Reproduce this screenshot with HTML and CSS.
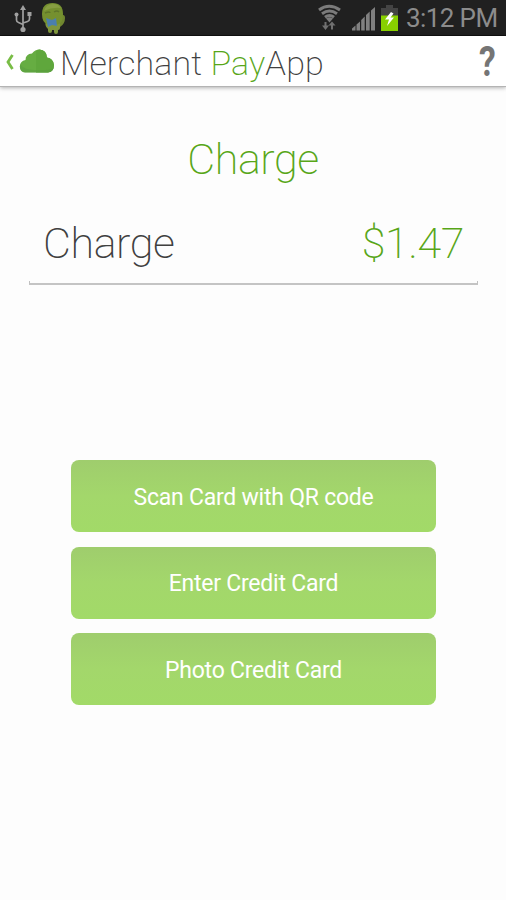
FILE: index.html
```html
<!DOCTYPE html>
<html lang="en">
<head>
<meta charset="utf-8">
<title>Merchant PayApp</title>
<link rel="stylesheet" href="styles.css">
</head>
<body>
<div class="status">
  <svg class="usb" width="18" height="28" viewBox="0 0 18 28" fill="none" stroke="#a0a0a0" stroke-width="1.700">
    <path d="M9 4v19M2.500 11v4q0 2 2 2.500l4.500 2M15.500 10v4q0 2-2 2.500L9 18"/>
    <path d="M9 0l3 5H6z" fill="#a0a0a0" stroke="none"/>
    <circle cx="9" cy="24.500" r="2.600" fill="#a0a0a0" stroke="none"/>
    <circle cx="2.500" cy="9.500" r="2" fill="#a0a0a0" stroke="none"/>
    <path d="M13.500 7h4v4h-4z" fill="#a0a0a0" stroke="none"/>
  </svg>
  <svg class="droid" width="24" height="31" viewBox="0 0 24 31">
    <path d="M18 13q5-3 5 2 0 6-5 9z" fill="#70862f"/>
    <path d="M4 16h14v9q0 2-2 2v2q0 2-2 2t-2-2v-2h-2v1q0 2-2 2t-2-2v-2q-4-3-2-10z" fill="#7f963c"/>
    <path d="M0 11Q0 0 10.500 0T21 11q0 8-4 10-6 2-12 0-5-2-5-10z" fill="#75902f"/>
    <path d="M2 8Q4 1 11 1q5 0 8 4-9-1-17 3z" fill="#879d42"/>
    <path d="M3 10q5-2 5 0M12 9q3-2 5 0" fill="none" stroke="#5f7629" stroke-width="1.500"/>
    <path d="M4 15l6 2 4-2 1 8-5-1-4 2z" fill="#4b7fae"/>
  </svg>
  <svg class="wifi" width="26" height="27" viewBox="0 0 26 27" fill="none" stroke="#7b7b7b" stroke-width="3">
    <path d="M2 6q10-7.500 21 0M5 9.700q7.500-5.500 15 0M8 13.200q4.500-3.500 9 0"/>
    <path d="M12.500 18.500L9 14.500q3.500-2.500 7 0z" fill="#7b7b7b" stroke="none"/>
    <path d="M8.500 18v5M15 25.500V21" stroke="#707070" stroke-width="2"/>
    <path d="M5 21.500h7L8.500 26zM11.500 21.500l3.500-4 3.500 4z" fill="#707070" stroke="none"/>
  </svg>
  <svg class="signal" width="24" height="24" viewBox="0 0 24 24" fill="#808080">
    <path d="M0 23.500v-2l3.500-3v5zM4.500 23.500v-6L8 14.500v9zM9.200 23.500V13l3.500-3.500v14zM14 23.500V8l3.700-3.500v19zM19 23.500V3.500l4-3.500v23.500z"/>
  </svg>
  <svg class="battery" width="17" height="26" viewBox="0 0 17 26">
    <path d="M5 0h7v3h5v8H0V3h5z" fill="#444"/>
    <path d="M0 10.500h17V26H0z" fill="#88d000"/>
    <path d="M10 7l-6 7.500h4L6 21l7-8.500H9.500l3-4z" fill="#fff"/>
  </svg>
  <span class="clock">3:12 PM</span>
</div>
<header class="bar">
  <svg class="back" width="8" height="16" viewBox="0 0 8 16" fill="none" stroke="#79bd46" stroke-width="2.800"><path d="M6.500 1Q4.500 4 2 8q2.500 4 4.500 7"/></svg>
  <svg class="cloud" width="36" height="24" viewBox="0 0 36 24">
    <path d="M6 23.500Q1 23 .8 17.500 1 12 6.500 11q0-6 6.500-6.500Q16 .500 20.500.500q7 .500 7.500 8 6 .500 7 7.500 0 7-6 7.500z" fill="#66ad42"/>
    <path d="M17 2.500Q18.500.500 20.500.500q7 .500 7.500 8 6 .500 7 7.500 0 7-6 7.500H17z" fill="#5fa73c"/>
    <path d="M6 23.500Q1 23 .8 17.500l.7-2q3 5 14 5.500 14 1 19-2-.5 4-5.500 4.500z" fill="#569840" opacity=".4"/>
  </svg>
  <h1 class="brand"><span>Merchant</span> <span class="green">Pay</span><span>App</span></h1>
  <span class="help">?</span>
</header>
<main>
  <h2 class="title">Charge</h2>
  <div class="row"><span class="label">Charge</span><span class="amount">$1.47</span></div>
  <div class="rule"></div>
  <div class="actions">
    <button>Scan Card with QR code</button>
    <button>Enter Credit Card</button>
    <button>Photo Credit Card</button>
  </div>
</main>
</body>
</html>
```
FILE: styles.css
```css
* { box-sizing: border-box; }
body { margin: 0; height: 900px; overflow: hidden; background: #fdfdfd; font-family: Roboto, "Liberation Sans", sans-serif; }
svg { display: block; flex: none; }
.status { height: 36px; background: #202020; border-bottom: 1px solid #111; display: flex; align-items: flex-start; }
.usb { margin: 5px 0 0 14px; }
.droid { margin: 3px 0 0 10px; }
.wifi { margin: 4px 0 0 251px; }
.signal { margin: 7px 0 0 9px; }
.battery { margin: 5px 0 0 5px; }
.clock { margin-left: 8px; line-height: 36px; font-size: 26px; color: #8c8c8c; white-space: nowrap; letter-spacing: -.6px; }
.bar { height: 51px; background: #fff; border-bottom: 1px solid #b4b4b4; box-shadow: 0 1px 4px rgba(0,0,0,.3); display: flex; align-items: flex-start; }
.back { margin: 18px 0 0 6px; }
.cloud { margin: 13px 0 0 5px; }
.brand { margin: 0 0 0 5px; font-size: 34px; font-weight: 200; line-height: 54px; letter-spacing: .13px; color: #404040; white-space: nowrap; }
.green { color: #58a618; }
.help { margin: 0 8px 0 auto; font-size: 42px; line-height: 51px; font-weight: 700; color: #757575; transform: scaleX(.8); }
main { display: flex; flex-direction: column; }
.title { margin: 46px 0 0; font-size: 43px; line-height: 53px; font-weight: 200; letter-spacing: -.4px; color: #58a618; text-align: center; }
.row { margin: 31px 28px 0; padding: 0 14px 0 15px; height: 64px; display: flex; justify-content: space-between; font-size: 43px; line-height: 53px; font-weight: 200; letter-spacing: -.4px; color: #404040; }
.amount { color: #58a618; }
.rule { height: 4px; margin: 0 28px 0 29px; border: 1px solid #c0c0c0; border-top: 0; border-bottom: 2px solid #c4c4c4; }
.actions { margin: 175px 70px 0 71px; display: flex; flex-direction: column; gap: 14.500px; }
button { height: 72px; padding: 2px 0 0; border: 0; border-radius: 8px; background: linear-gradient(#9fcd6d, #a3d76b 50%, #a2da68); color: #fff; font: 400 23px Roboto, sans-serif; letter-spacing: -.23px; white-space: nowrap; }
```
